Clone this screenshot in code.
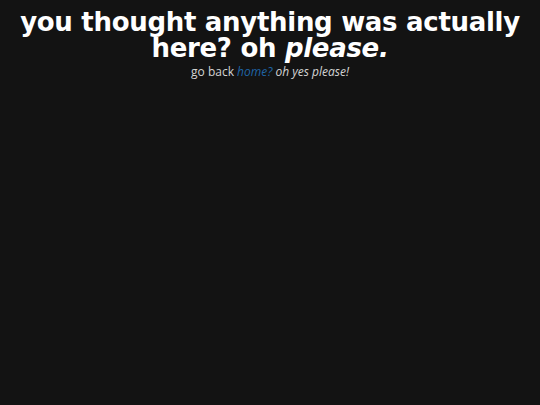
export default function App() {
  return (
    <div className="min-h-screen bg-[#131313] text-center">
      <h1 className="pt-[9px] text-[26px] leading-[26px] tracking-[-0.3px] font-bold text-white [font-family:'DejaVu_Sans',Verdana,Tahoma,sans-serif]">
        you thought anything was actually
        <br />
        here? oh <em>please.</em>
      </h1>
      <p className="mt-[4px] text-[12px] leading-[14px] text-[#d4d4d4] [font-family:'Open_Sans',sans-serif]">
        go back{' '}
        <a href="#" className="italic text-[#1f65a6]">
          home?
        </a>{' '}
        <em>oh yes please!</em>
      </p>
    </div>
  );
}
